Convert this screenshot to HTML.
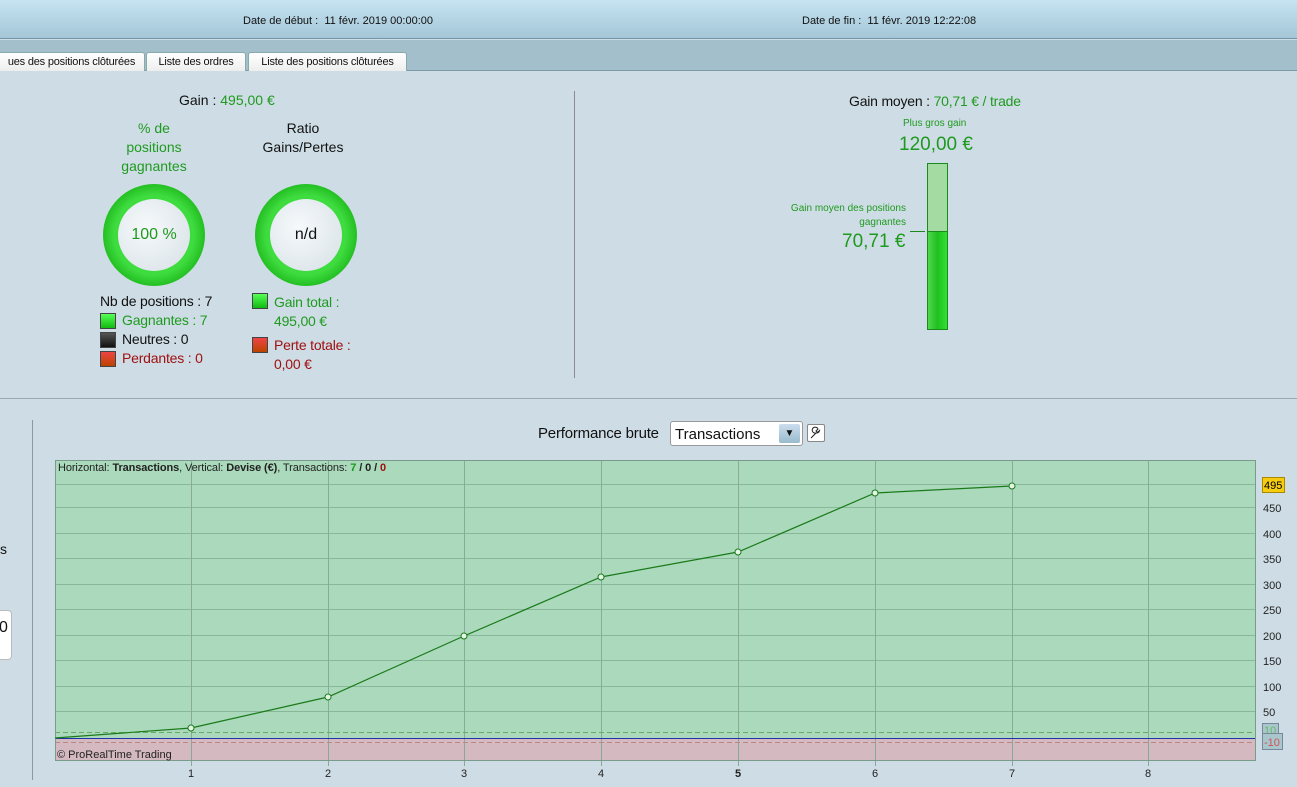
<!DOCTYPE html>
<html><head><meta charset="utf-8"><style>
*{margin:0;padding:0;box-sizing:border-box}
body{width:1297px;height:787px;overflow:hidden;background:#cedde5;font-family:"Liberation Sans",sans-serif;position:relative;color:#111}
.a{position:absolute;white-space:nowrap}
.g{color:#1f9a1f}.r{color:#a01010}
.hdr{position:absolute;left:0;top:0;width:1297px;height:39px;background:linear-gradient(#c6e4f2,#a4c6d6);border-bottom:1px solid #6f96a8}
.tabbar{position:absolute;left:0;top:40px;width:1297px;height:31px;background:#a3bfcc;border-bottom:1px solid #7e9aa8}
.tab{position:absolute;top:12px;height:19px;background:linear-gradient(#fff,#eee);border:1px solid #8aa;border-bottom:none;border-radius:3px 3px 0 0;font-size:11px;padding-top:3px;text-align:center;letter-spacing:-0.2px}
.ring{position:absolute;width:102px;height:102px;border-radius:50%;background:radial-gradient(circle,#3fdc3f 55%,#24c024 70%,#3ee03e 100%)}
.ring div{position:absolute;left:15px;top:15px;width:72px;height:72px;border-radius:50%;background:radial-gradient(circle at 40% 40%,#f6f9fb,#d6e0e6);font-size:16px;text-align:center;line-height:72px}
.sq{position:absolute;width:16px;height:16px;border:1px solid #444}
.lg{font-size:14px;letter-spacing:-0.2px}
</style></head><body>
<div class="hdr"></div>
<div class="a" style="left:243px;top:15px;font-size:11px">Date de début :&nbsp; 11 févr. 2019 00:00:00</div>
<div class="a" style="left:802px;top:15px;font-size:11px">Date de fin :&nbsp; 11 févr. 2019 12:22:08</div>
<div class="tabbar">
<div class="tab" style="left:-2px;width:147px">ues des positions clôturées</div>
<div class="tab" style="left:146px;width:100px">Liste des ordres</div>
<div class="tab" style="left:248px;width:159px">Liste des positions clôturées</div>
</div>
<div class="a" style="left:179px;top:92px;font-size:14px">Gain : <span class="g">495,00 €</span></div>
<div class="a g" style="left:109px;top:119px;width:90px;text-align:center;font-size:14px;line-height:19px;white-space:normal">% de positions gagnantes</div>
<div class="a" style="left:253px;top:119px;width:100px;text-align:center;font-size:14px;line-height:19px;white-space:normal">Ratio Gains/Pertes</div>
<div class="ring" style="left:103px;top:184px"><div class="g">100 %</div></div>
<div class="ring" style="left:255px;top:184px"><div>n/d</div></div>
<div class="a lg" style="left:100px;top:293px">Nb de positions : 7</div>
<div class="sq" style="left:100px;top:313px;background:linear-gradient(#5f5,#1b1)"></div><div class="a lg g" style="left:122px;top:312px">Gagnantes : 7</div>
<div class="sq" style="left:100px;top:332px;background:linear-gradient(#555,#111)"></div><div class="a lg" style="left:122px;top:331px">Neutres : 0</div>
<div class="sq" style="left:100px;top:351px;background:linear-gradient(#e44,#b40)"></div><div class="a lg r" style="left:122px;top:350px">Perdantes : 0</div>
<div class="sq" style="left:252px;top:293px;background:linear-gradient(#5f5,#1b1)"></div><div class="a lg g" style="left:274px;top:293px;line-height:19px">Gain total :<br>495,00 €</div>
<div class="sq" style="left:252px;top:337px;background:linear-gradient(#e44,#b40)"></div><div class="a lg r" style="left:274px;top:336px;line-height:19px">Perte totale :<br>0,00 €</div>
<div class="a" style="left:574px;top:91px;width:1px;height:287px;background:#889"></div>
<div class="a" style="left:849px;top:93px;font-size:14px;letter-spacing:-0.2px">Gain moyen : <span class="g">70,71 € / trade</span></div>
<div class="a g" style="left:903px;top:118px;font-size:10px">Plus gros gain</div>
<div class="a g" style="left:899px;top:134px;font-size:19px">120,00 €</div>
<div class="a g" style="left:760px;top:202px;width:146px;text-align:right;font-size:10px;line-height:14px">Gain moyen des positions<br>gagnantes</div>
<div class="a g" style="left:842px;top:231px;font-size:19px">70,71 €</div>
<div class="a" style="left:910px;top:231px;width:15px;height:1px;background:#1a8a1a"></div>
<div class="a" style="left:927px;top:163px;width:21px;height:167px;border:1px solid #1a8a1a;background:#a3dba3"></div>
<div class="a" style="left:927px;top:231px;width:21px;height:99px;border:1px solid #1a8a1a;background:linear-gradient(90deg,#4ed84e,#20c020 50%,#30e030)"></div>
<div class="a" style="left:0;top:398px;width:1297px;height:1px;background:#99aab4"></div>
<div class="a" style="left:32px;top:420px;width:1px;height:360px;background:#889aa4"></div>
<div class="a" style="left:0;top:541px;font-size:14px">s</div>
<div class="a" style="left:-8px;top:610px;width:20px;height:50px;background:#fff;border:1px solid #bbb;border-radius:4px;font-size:16px;padding:8px 0 0 6px">0</div>
<div class="a" style="left:538px;top:425px;font-size:15px;letter-spacing:-0.2px">Performance brute</div>
<div class="a" style="left:670px;top:421px;width:133px;height:25px;background:#fff;border:1px solid #999;border-radius:3px;font-size:15px;padding:4px 4px">Transactions</div>
<div class="a" style="left:779px;top:424px;width:21px;height:19px;background:linear-gradient(#cde,#9bc);border-radius:2px;font-size:10px;text-align:center;line-height:19px">▼</div>
<div class="a" style="left:807px;top:424px;width:18px;height:18px;background:#fff;border:1px solid #888;border-radius:2px"></div>
<svg class="a" style="left:807px;top:424px" width="18" height="18"><path d="M4 14 L9 9 M9 9 a3 3 0 1 1 2 -4 l-2 2 l1.5 1.5 l2-2 a3 3 0 0 1 -3.5 2.5 z" fill="none" stroke="#222" stroke-width="1"/></svg>
<svg class="a" style="left:0;top:0" width="1297" height="787">
<rect x="55" y="460" width="1201" height="279" fill="#aad9bb"/>
<rect x="55" y="739" width="1201" height="22" fill="#d4b9c1"/>
<g stroke="#88b899" stroke-width="1">
<line x1="55" x2="1256" y1="484.5" y2="484.5"/><line x1="55" x2="1256" y1="507.5" y2="507.5"/><line x1="55" x2="1256" y1="533.5" y2="533.5"/><line x1="55" x2="1256" y1="558.5" y2="558.5"/><line x1="55" x2="1256" y1="584.5" y2="584.5"/><line x1="55" x2="1256" y1="609.5" y2="609.5"/><line x1="55" x2="1256" y1="635.5" y2="635.5"/><line x1="55" x2="1256" y1="660.5" y2="660.5"/><line x1="55" x2="1256" y1="686.5" y2="686.5"/><line x1="55" x2="1256" y1="711.5" y2="711.5"/>
</g>
<g stroke="#88aa99"><line x1="191.5" x2="191.5" y1="460" y2="766"/><line x1="328.5" x2="328.5" y1="460" y2="766"/><line x1="464.5" x2="464.5" y1="460" y2="766"/><line x1="601.5" x2="601.5" y1="460" y2="766"/><line x1="738.5" x2="738.5" y1="460" y2="766"/><line x1="875.5" x2="875.5" y1="460" y2="766"/><line x1="1012.5" x2="1012.5" y1="460" y2="766"/><line x1="1148.5" x2="1148.5" y1="460" y2="766"/></g>
<line x1="55" x2="1256" y1="732.5" y2="732.5" stroke="#6a6" stroke-dasharray="5,3"/>
<line x1="55" x2="1256" y1="742.5" y2="742.5" stroke="#b88" stroke-dasharray="5,3"/>
<line x1="55" x2="1256" y1="738.5" y2="738.5" stroke="#2233aa"/>
<rect x="55.5" y="460.5" width="1200" height="300" fill="none" stroke="#7a9a8a"/>
<polyline fill="none" stroke="#1a7a1a" stroke-width="1.2" points="55,738 191,728 328,697 464,636 601,577 738,552 875,493 1012,486"/>
<g fill="#e6f5e6" stroke="#1a7a1a"><circle cx="191" cy="728" r="3"/><circle cx="328" cy="697" r="3"/><circle cx="464" cy="636" r="3"/><circle cx="601" cy="577" r="3"/><circle cx="738" cy="552" r="3"/><circle cx="875" cy="493" r="3"/><circle cx="1012" cy="486" r="3"/></g>
<g font-family="Liberation Sans" font-size="11" fill="#222">
<text x="58" y="471" letter-spacing="-0.1">Horizontal: <tspan font-weight="bold">Transactions</tspan>, Vertical: <tspan font-weight="bold">Devise (€)</tspan>, Transactions: <tspan fill="#1a9a1a" font-weight="bold">7</tspan><tspan font-weight="bold"> / 0 / </tspan><tspan fill="#a01010" font-weight="bold">0</tspan></text>
<text x="57" y="758">© ProRealTime Trading</text>
<text x="188" y="777">1</text><text x="325" y="777">2</text><text x="461" y="777">3</text><text x="598" y="777">4</text><text x="735" y="777" font-weight="bold">5</text><text x="872" y="777">6</text><text x="1009" y="777">7</text><text x="1145" y="777">8</text>
<text x="1263" y="512">450</text><text x="1263" y="538">400</text><text x="1263" y="563">350</text><text x="1263" y="589">300</text><text x="1263" y="614">250</text><text x="1263" y="640">200</text><text x="1263" y="665">150</text><text x="1263" y="691">100</text><text x="1263" y="716">50</text>
</g>
<rect x="1262.5" y="477.5" width="22" height="15" fill="#f5cc10" stroke="#a80"/>
<text x="1264" y="489" font-family="Liberation Sans" font-size="11">495</text>
<rect x="1262.5" y="723.5" width="16" height="13" fill="#a9c6cc" stroke="#789"/>
<text x="1264" y="734" font-family="Liberation Sans" font-size="11" fill="#6b6">10</text>
<rect x="1262.5" y="733.5" width="20" height="16" fill="#a9c6cc" stroke="#789"/>
<text x="1264" y="746" font-family="Liberation Sans" font-size="11" fill="#c55">-10</text>
</svg>
</body></html>
